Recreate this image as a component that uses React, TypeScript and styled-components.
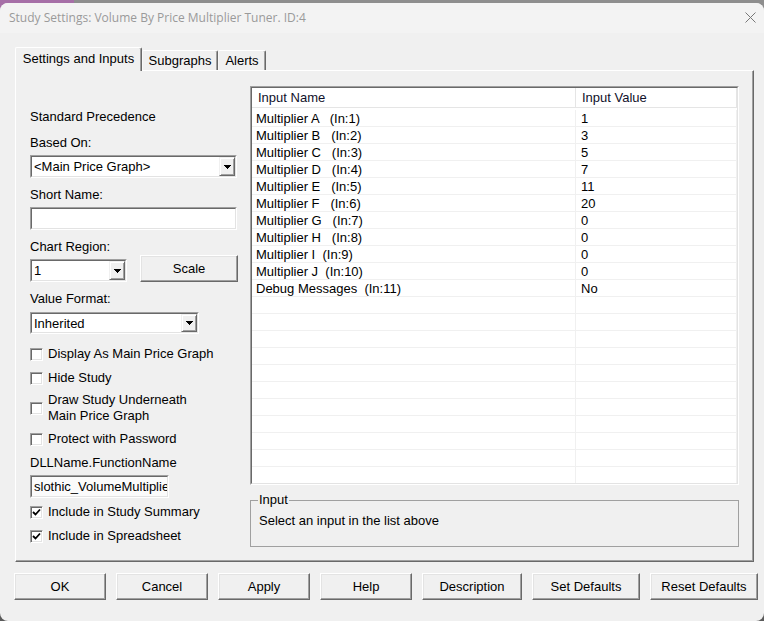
import React from 'react';
import styled, { createGlobalStyle } from 'styled-components';

const Global = createGlobalStyle`
  html, body { margin: 0; padding: 0; }
  body {
    font-family: "Liberation Sans", Arial, sans-serif;
    font-size: 13px;
    color: #000;
    background: #5a5a5a;
  }
  * { box-sizing: border-box; }
`;

const Page = styled.div`
  width: 764px;
  height: 621px;
  overflow: hidden;
  padding-top: 3px;
  background:
    linear-gradient(to right, #a66fa7 0, #a66fa7 74px, #8e8e8e 74px) top / 100% 12px no-repeat,
    #5a5a5a;
`;

const Window = styled.div`
  height: 618px;
  background: #f0f0f0;
  border-radius: 8px;
  overflow: hidden;
  display: flex;
  flex-direction: column;
`;

const TitleBar = styled.div`
  height: 30px;
  flex: none;
  background: #f3f3f3;
  display: flex;
  align-items: center;
  justify-content: space-between;
  padding: 0 8px 1px 9px;
`;

const TitleText = styled.div`
  font-family: "Open Sans", "Noto Sans", sans-serif;
  font-size: 12px;
  color: #9a9a9a;
  white-space: nowrap;
`;

const Body = styled.div`
  display: flex;
  flex-direction: column;
  padding-top: 14px;
`;

const TabRow = styled.div`
  display: flex;
  align-items: flex-end;
  height: 23px;
  margin-left: 15px;
  position: relative;
  z-index: 1;
`;

const Tab = styled.div<{ $w: number; $active?: boolean }>`
  width: ${p => p.$w}px;
  height: ${p => (p.$active ? 24 : 20)}px;
  margin-bottom: ${p => (p.$active ? -1 : 0)}px;
  background: #f0f0f0;
  border-top: 1px solid #fff;
  border-left: 1px solid ${p => (p.$active ? '#fff' : '#f8f8f8')};
  border-right: 1px solid #696969;
  box-shadow: inset -1px 0 0 #a0a0a0;
  border-radius: 2px 2px 0 0;
  display: flex;
  align-items: ${p => (p.$active ? 'flex-start' : 'center')};
  padding-top: ${p => (p.$active ? 3 : 0)}px;
  justify-content: center;
  line-height: 16px;
  white-space: nowrap;
`;

const Panel = styled.div`
  margin-left: 15px;
  width: 739px;
  height: 492px;
  border-top: 1px solid #fff;
  border-left: 1px solid #fff;
  border-right: 1px solid #696969;
  border-bottom: 1px solid #696969;
  box-shadow: inset -1px -1px 0 #a0a0a0;
  display: flex;
  padding: 15px 0 0 14px;
`;

const LeftCol = styled.div`
  width: 208px;
  margin-right: 12px;
  padding-top: 23px;
  display: flex;
  flex-direction: column;
`;

const RightCol = styled.div`
  width: 489px;
  display: flex;
  flex-direction: column;
`;

const Label = styled.div<{ $mt: number }>`
  margin-top: ${p => p.$mt}px;
  line-height: 16px;
  white-space: nowrap;
`;

const Sunken = styled.div<{ $w: number; $h: number; $mt?: number }>`
  width: ${p => p.$w}px;
  height: ${p => p.$h}px;
  margin-top: ${p => p.$mt ?? 0}px;
  flex: none;
  border-top: 1px solid #a0a0a0;
  border-left: 1px solid #a0a0a0;
  border-right: 1px solid #fff;
  border-bottom: 1px solid #fff;
  display: flex;
`;

const SunkenInner = styled.div<{ $bg?: string }>`
  flex: 1;
  min-width: 0;
  display: flex;
  align-items: center;
  border-top: 1px solid #696969;
  border-left: 1px solid #696969;
  border-right: 1px solid #e3e3e3;
  border-bottom: 1px solid #e3e3e3;
  background: ${p => p.$bg ?? '#fff'};
  overflow: hidden;
`;

const FieldText = styled.span`
  flex: 1;
  min-width: 0;
  padding: 1px 0 0 2px;
  white-space: nowrap;
  overflow: hidden;
  line-height: 16px;
`;

const DropButton = styled.div`
  width: 16px;
  height: 100%;
  flex: none;
  background: #f0f0f0;
  border-top: 1px solid #f0f0f0;
  border-left: 1px solid #f0f0f0;
  border-right: 1px solid #696969;
  border-bottom: 1px solid #696969;
  box-shadow: inset 1px 1px 0 #fff, inset -1px -1px 0 #a0a0a0;
  display: flex;
  align-items: center;
  justify-content: center;
`;

const RegionRow = styled.div`
  display: flex;
  align-items: flex-end;
  gap: 13px;
`;

const Button = styled.button<{ $w: number; $h?: number }>`
  width: ${p => p.$w}px;
  height: ${p => p.$h ?? 27}px;
  flex: none;
  padding: 0;
  margin: 0;
  font: inherit;
  color: #000;
  background: #f0f0f0;
  border-top: 1px solid #fff;
  border-left: 1px solid #fff;
  border-right: 1px solid #696969;
  border-bottom: 1px solid #696969;
  box-shadow: inset -1px -1px 0 #a0a0a0, inset 1px 1px 0 #e3e3e3;
  display: flex;
  align-items: center;
  justify-content: center;
  line-height: 16px;
`;

const CheckRow = styled.div<{ $mt: number }>`
  margin-top: ${p => p.$mt}px;
  display: flex;
  align-items: center;
  gap: 5px;
  line-height: 16px;
`;

const Box = styled.div`
  width: 13px;
  height: 13px;
  flex: none;
  background: #fff;
  border-top: 1px solid #a0a0a0;
  border-left: 1px solid #a0a0a0;
  border-right: 1px solid #fff;
  border-bottom: 1px solid #fff;
  box-shadow: inset 1px 1px 0 #696969, inset -1px -1px 0 #e3e3e3;
  display: flex;
  align-items: center;
  justify-content: center;
`;

const TableFrame = styled.div`
  height: 399px;
  border-top: 1px solid #a0a0a0;
  border-left: 1px solid #a0a0a0;
  border-right: 1px solid #fff;
  border-bottom: 1px solid #fff;
  display: flex;
`;

const TableInner = styled.div`
  flex: 1;
  background: #fff;
  border-top: 1px solid #696969;
  border-left: 1px solid #696969;
  border-right: 1px solid #e3e3e3;
  border-bottom: 1px solid #e3e3e3;
  overflow: hidden;
  display: flex;
  flex-direction: column;
`;

const HeaderRow = styled.div`
  display: flex;
  height: 20px;
  flex: none;
  border-bottom: 1px solid #e5e5e5;
  margin-bottom: 2px;
`;

const HeaderCell = styled.div<{ $w: number }>`
  width: ${p => p.$w}px;
  flex: none;
  padding-left: 6px;
  border-right: 1px solid #e5e5e5;
  display: flex;
  align-items: center;
  line-height: 16px;
  color: #10102a;
`;

const Row = styled.div`
  display: flex;
  height: 17px;
  flex: none;
  border-bottom: 1px solid #f0f0f0;
`;

const Cell = styled.div<{ $w: number; $pl: number }>`
  width: ${p => p.$w}px;
  flex: none;
  padding: 1px 0 0 ${p => p.$pl}px;
  border-right: 1px solid #f0f0f0;
  display: flex;
  align-items: center;
  line-height: 16px;
  white-space: pre;
`;

const Group = styled.fieldset`
  margin: 8px 0 0 0;
  padding: 0 7px;
  height: 54px;
  border: 1px solid #a0a0a0;
  min-width: 0;
`;

const Legend = styled.legend`
  padding: 0 1px;
  line-height: 14px;
`;

const GroupText = styled.div`
  margin: 6px 0 0 1px;
  line-height: 16px;
`;

const ButtonBar = styled.div`
  display: flex;
  gap: 10px;
  margin: 11px 0 0 14px;
`;

const Arrow = () => (
  <svg width="7" height="4" viewBox="0 0 7 4" shapeRendering="crispEdges">
    <polygon points="0,0 7,0 3.5,4" fill="#000" />
  </svg>
);

const Check = () => (
  <svg width="9" height="9" viewBox="0 0 9 9">
    <polyline points="1,4 3.5,6.5 8,1.5" fill="none" stroke="#000" strokeWidth="1.8" />
  </svg>
);

const Combo = ({ w, h, mt, text }: { w: number; h: number; mt?: number; text: string }) => (
  <Sunken $w={w} $h={h} $mt={mt}>
    <SunkenInner>
      <FieldText>{text}</FieldText>
      <DropButton>
        <Arrow />
      </DropButton>
    </SunkenInner>
  </Sunken>
);

const CheckItem = ({ mt, checked, children }: { mt: number; checked?: boolean; children: React.ReactNode }) => (
  <CheckRow $mt={mt}>
    <Box>{checked && <Check />}</Box>
    <div>{children}</div>
  </CheckRow>
);

const rows: [string, string][] = [
  ['Multiplier A   (In:1)', '1'],
  ['Multiplier B   (In:2)', '3'],
  ['Multiplier C   (In:3)', '5'],
  ['Multiplier D   (In:4)', '7'],
  ['Multiplier E   (In:5)', '11'],
  ['Multiplier F   (In:6)', '20'],
  ['Multiplier G   (In:7)', '0'],
  ['Multiplier H   (In:8)', '0'],
  ['Multiplier I  (In:9)', '0'],
  ['Multiplier J  (In:10)', '0'],
  ['Debug Messages  (In:11)', 'No'],
];

const allRows: [string, string][] = [...rows, ...Array.from({ length: 11 }, () => ['', ''] as [string, string])];

const buttons: [string, number][] = [
  ['OK', 92],
  ['Cancel', 92],
  ['Apply', 92],
  ['Help', 92],
  ['Description', 100],
  ['Set Defaults', 108],
  ['Reset Defaults', 108],
];

export default function App() {
  return (
    <>
      <Global />
      <Page>
        <Window>
          <TitleBar>
            <TitleText>Study Settings: Volume By Price Multiplier Tuner. ID:4</TitleText>
            <svg width="11" height="11" viewBox="0 0 11 11">
              <path d="M0.5 0.5 L10.5 10.5 M10.5 0.5 L0.5 10.5" stroke="#777" strokeWidth="1" />
            </svg>
          </TitleBar>
          <Body>
            <TabRow>
              <Tab $w={127} $active>Settings and Inputs</Tab>
              <Tab $w={76}>Subgraphs</Tab>
              <Tab $w={48}>Alerts</Tab>
            </TabRow>
            <Panel>
              <LeftCol>
                <Label $mt={0}>Standard Precedence</Label>
                <Label $mt={10}>Based On:</Label>
                <Combo w={207} h={23} mt={4} text="<Main Price Graph>" />
                <Label $mt={9}>Short Name:</Label>
                <Sunken $w={207} $h={23} $mt={4}>
                  <SunkenInner />
                </Sunken>
                <Label $mt={9}>Chart Region:</Label>
                <RegionRow>
                  <Combo w={97} h={23} text="1" />
                  <Button $w={98}>Scale</Button>
                </RegionRow>
                <Label $mt={9}>Value Format:</Label>
                <Combo w={169} h={22} mt={5} text="Inherited" />
                <CheckItem mt={12}>Display As Main Price Graph</CheckItem>
                <CheckItem mt={8}>Hide Study</CheckItem>
                <CheckItem mt={6}>
                  Draw Study Underneath
                  <br />
                  Main Price Graph
                </CheckItem>
                <CheckItem mt={7}>Protect with Password</CheckItem>
                <Label $mt={8}>DLLName.FunctionName</Label>
                <Sunken $w={139} $h={23} $mt={4}>
                  <SunkenInner $bg="#fbfbfb">
                    <FieldText>slothic_VolumeMultiplier</FieldText>
                  </SunkenInner>
                </Sunken>
                <CheckItem mt={6} checked>
                  Include in Study Summary
                </CheckItem>
                <CheckItem mt={8} checked>
                  Include in Spreadsheet
                </CheckItem>
              </LeftCol>
              <RightCol>
                <TableFrame>
                  <TableInner>
                    <HeaderRow>
                      <HeaderCell $w={324}>Input Name</HeaderCell>
                      <HeaderCell $w={161}>Input Value</HeaderCell>
                    </HeaderRow>
                    {allRows.map(([name, value], i) => (
                      <Row key={i}>
                        <Cell $w={324} $pl={4}>{name}</Cell>
                        <Cell $w={161} $pl={5}>{value}</Cell>
                      </Row>
                    ))}
                  </TableInner>
                </TableFrame>
                <Group>
                  <Legend>Input</Legend>
                  <GroupText>Select an input in the list above</GroupText>
                </Group>
              </RightCol>
            </Panel>
            <ButtonBar>
              {buttons.map(([label, w]) => (
                <Button key={label} $w={w}>
                  {label}
                </Button>
              ))}
            </ButtonBar>
          </Body>
        </Window>
      </Page>
    </>
  );
}
